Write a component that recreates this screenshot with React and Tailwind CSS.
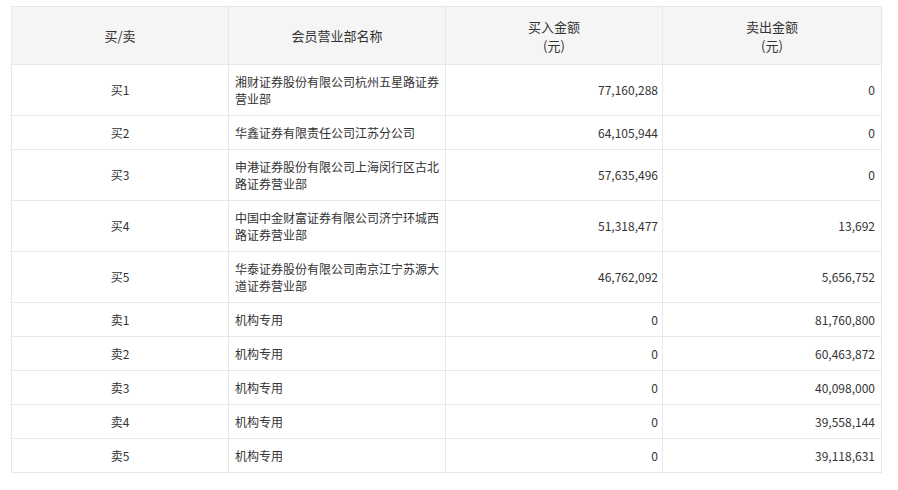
export default function App(){
const rows=[["买1","湘财证券股份有限公司杭州五星路证券营业部","77,160,288","0",51],["买2","华鑫证券有限责任公司江苏分公司","64,105,944","0",34],["买3","申港证券股份有限公司上海闵行区古北路证券营业部","57,635,496","0",51],["买4","中国中金财富证券有限公司济宁环城西路证券营业部","51,318,477","13,692",51],["买5","华泰证券股份有限公司南京江宁苏源大道证券营业部","46,762,092","5,656,752",51],["卖1","机构专用","0","81,760,800",34],["卖2","机构专用","0","60,463,872",34],["卖3","机构专用","0","40,098,000",34],["卖4","机构专用","0","39,558,144",34],["卖5","机构专用","0","39,118,631",34]];
const ff={fontFamily:'"Noto Sans CJK SC","Noto Sans",sans-serif'};
return <div className="bg-white w-[898px] h-[490px] pt-[6px] pl-[11px]" style={ff}>
<table className="w-[870px] border-collapse text-[12px] text-[#333] table-fixed">
<colgroup><col className="w-[217px]"/><col className="w-[217px]"/><col className="w-[217px]"/><col className="w-[219px]"/></colgroup>
<thead><tr className="bg-[#f5f5f5] h-[58px] text-[13px]">
<th className="border border-[#e8e8e8] font-normal">买/卖</th>
<th className="border border-[#e8e8e8] font-normal">会员营业部名称</th>
<th className="border border-[#e8e8e8] font-normal leading-[19px]">买入金额<br/>(元)</th>
<th className="border border-[#e8e8e8] font-normal leading-[19px]">卖出金额<br/>(元)</th></tr></thead>
<tbody>{rows.map(r=><tr key={r[0]} style={{height:r[4]}}>
<td className="border border-[#e8e8e8] text-center">{r[0]}</td>
<td className="border border-[#e8e8e8] px-[6px] leading-[17px]">{r[1]}</td>
<td className="border border-[#e8e8e8] px-[4px] text-right">{r[2]}</td>
<td className="border border-[#e8e8e8] px-[6px] text-right">{r[3]}</td></tr>)}</tbody>
</table></div>}
